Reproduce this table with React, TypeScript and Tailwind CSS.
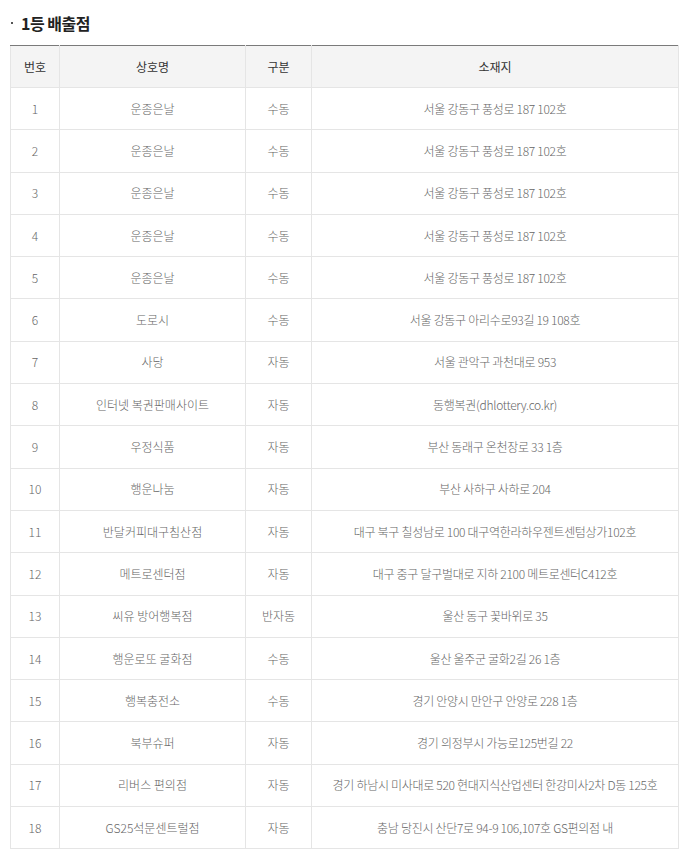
import React from "react";

const rows = [
  { no: 1, name: "운종은날", kind: "수동", addr: "서울 강동구 풍성로 187 102호" },
  { no: 2, name: "운종은날", kind: "수동", addr: "서울 강동구 풍성로 187 102호" },
  { no: 3, name: "운종은날", kind: "수동", addr: "서울 강동구 풍성로 187 102호" },
  { no: 4, name: "운종은날", kind: "수동", addr: "서울 강동구 풍성로 187 102호" },
  { no: 5, name: "운종은날", kind: "수동", addr: "서울 강동구 풍성로 187 102호" },
  { no: 6, name: "도로시", kind: "수동", addr: "서울 강동구 아리수로93길 19 108호" },
  { no: 7, name: "사당", kind: "자동", addr: "서울 관악구 과천대로 953" },
  { no: 8, name: "인터넷 복권판매사이트", kind: "자동", addr: "동행복권(dhlottery.co.kr)" },
  { no: 9, name: "우정식품", kind: "자동", addr: "부산 동래구 온천장로 33 1층" },
  { no: 10, name: "행운나눔", kind: "자동", addr: "부산 사하구 사하로 204" },
  { no: 11, name: "반달커피대구침산점", kind: "자동", addr: "대구 북구 칠성남로 100 대구역한라하우젠트센텀상가102호" },
  { no: 12, name: "메트로센터점", kind: "자동", addr: "대구 중구 달구벌대로 지하 2100 메트로센터C412호" },
  { no: 13, name: "씨유 방어행복점", kind: "반자동", addr: "울산 동구 꽃바위로 35" },
  { no: 14, name: "행운로또 굴화점", kind: "수동", addr: "울산 울주군 굴화2길 26 1층" },
  { no: 15, name: "행복충전소", kind: "수동", addr: "경기 안양시 만안구 안양로 228 1층" },
  { no: 16, name: "북부슈퍼", kind: "자동", addr: "경기 의정부시 가능로125번길 22" },
  { no: 17, name: "리버스 편의점", kind: "자동", addr: "경기 하남시 미사대로 520 현대지식산업센터 한강미사2차 D동 125호" },
  { no: 18, name: "GS25석문센트럴점", kind: "자동", addr: "충남 당진시 산단7로 94-9 106,107호 GS편의점 내" },
];

const cell = "border border-[#e5e5e5] text-center align-middle";

export default function App() {
  return (
    <div
      className="bg-white pl-[10px] pr-[1px] pt-[12px]"
      style={{ fontFamily: '"Noto Sans CJK KR", "Noto Sans", sans-serif' }}
    >
      <h3 className="flex items-center text-[16px] font-bold leading-[22px] text-[#222] tracking-[-0.5px]">
        <span className="ml-[1px] mr-[8px] h-[2px] w-[2px] shrink-0 bg-[#555]" />
        1등 배출점
      </h3>

      <table className="mt-[11px] w-full table-fixed border-collapse border-t border-t-[#7a7a7a] text-[12px]">
        <colgroup>
          <col className="w-[49px]" />
          <col className="w-[186px]" />
          <col className="w-[66px]" />
          <col />
        </colgroup>
        <thead>
          <tr className="bg-[#f4f4f4] text-[#333]">
            <th className={`${cell} h-[42px] border-t-[#7a7a7a] font-normal`}>번호</th>
            <th className={`${cell} border-t-[#7a7a7a] font-normal`}>상호명</th>
            <th className={`${cell} border-t-[#7a7a7a] font-normal`}>구분</th>
            <th className={`${cell} border-t-[#7a7a7a] font-normal`}>소재지</th>
          </tr>
        </thead>
        <tbody className="text-[#666] font-light">
          {rows.map((r) => (
            <tr key={r.no}>
              <td className={`${cell} h-[42.3px]`}>{r.no}</td>
              <td className={cell}>{r.name}</td>
              <td className={cell}>{r.kind}</td>
              <td className={`${cell} tracking-[-0.3px]`}>{r.addr}</td>
            </tr>
          ))}
        </tbody>
      </table>
    </div>
  );
}
